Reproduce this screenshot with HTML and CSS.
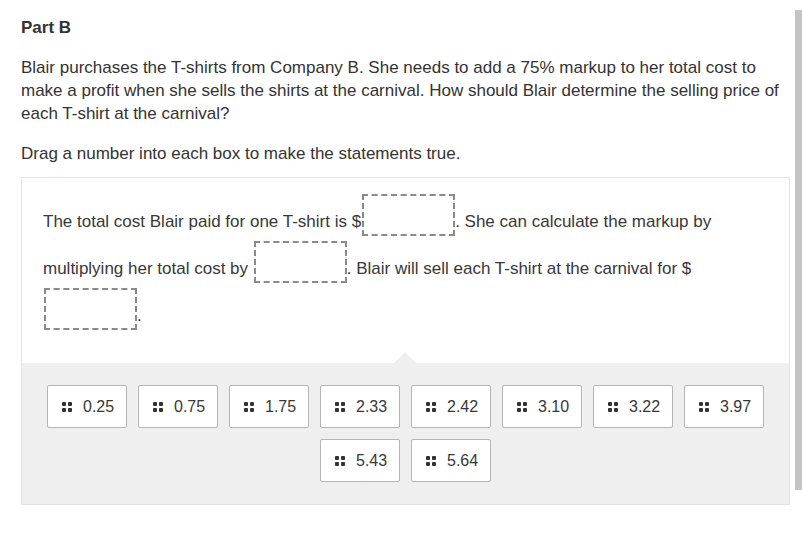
FILE: index.html
```html
<!DOCTYPE html>
<html>
<head>
<meta charset="utf-8">
<link rel="stylesheet" href="styles.css">
</head>
<body>
<div class="page">
  <h2 class="part-title">Part B</h2>
  <p class="question">Blair purchases the T-shirts from Company B. She needs to add a 75% markup to her total cost to make a profit when she sells the shirts at the carnival. How should Blair determine the selling price of each T-shirt at the carnival?</p>
  <p class="instruction">Drag a number into each box to make the statements true.</p>
  <div class="interaction">
    <div class="statement-area">
      <p class="statement">The total cost Blair paid for one T-shirt is $<span class="drop"></span>. She can calculate the markup by multiplying her total cost by <span class="drop"></span>. Blair will sell each T-shirt at the carnival for $ <span class="drop"></span>.</p>
    </div>
    <div class="tray">
      <span class="notch"></span>
      <div class="tile"><span class="grip"><i></i><i></i><i></i><i></i></span>0.25</div>
      <div class="tile"><span class="grip"><i></i><i></i><i></i><i></i></span>0.75</div>
      <div class="tile"><span class="grip"><i></i><i></i><i></i><i></i></span>1.75</div>
      <div class="tile"><span class="grip"><i></i><i></i><i></i><i></i></span>2.33</div>
      <div class="tile"><span class="grip"><i></i><i></i><i></i><i></i></span>2.42</div>
      <div class="tile"><span class="grip"><i></i><i></i><i></i><i></i></span>3.10</div>
      <div class="tile"><span class="grip"><i></i><i></i><i></i><i></i></span>3.22</div>
      <div class="tile"><span class="grip"><i></i><i></i><i></i><i></i></span>3.97</div>
      <div class="tile"><span class="grip"><i></i><i></i><i></i><i></i></span>5.43</div>
      <div class="tile"><span class="grip"><i></i><i></i><i></i><i></i></span>5.64</div>
    </div>
  </div>
</div>
<div class="scrollbar"></div>
</body>
</html>
```
FILE: styles.css
```css
html, body {
  margin: 0;
  padding: 0;
  background: #ffffff;
}
body {
  font-family: "Liberation Sans", Arial, sans-serif;
  font-size: 17px;
  color: #333333;
  width: 802px;
  height: 556px;
  overflow: hidden;
  position: relative;
}
.page {
  padding: 16px 11px 0 21px;
}
.part-title {
  margin: 0;
  font-size: 17px;
  font-weight: bold;
  line-height: 23px;
  color: #333333;
}
.question {
  margin: 17px 0 0 0;
  line-height: 23px;
}
.instruction {
  margin: 17px 0 0 0;
  line-height: 23px;
}
.interaction {
  margin-top: 12px;
  border: 1px solid #e3e3e3;
  width: 767px;
}
.statement-area {
  padding: 16px 21px 28px 21px;
  background: #ffffff;
}
.statement {
  margin: 0;
  line-height: 38px;
  color: #383838;
}
.drop {
  display: inline-block;
  width: 89px;
  height: 38px;
  border: 2px dashed #8a8a8a;
  vertical-align: -9px;
  margin-left: 1px;
  box-sizing: content-box;
}
.tray {
  position: relative;
  background: #efefef;
  padding: 22px 20px 22px 20px;
  display: flex;
  flex-wrap: wrap;
  justify-content: center;
  gap: 11px 11px;
}
.notch {
  position: absolute;
  left: 372px;
  top: -11px;
  width: 0;
  height: 0;
  border-left: 11px solid transparent;
  border-right: 11px solid transparent;
  border-bottom: 11px solid #efefef;
}
.tile {
  display: flex;
  align-items: center;
  box-sizing: border-box;
  width: 80px;
  height: 43px;
  padding: 0 0 0 14px;
  background: #ffffff;
  border: 1px solid #b5b5b5;
  border-radius: 2px;
  color: #383838;
  font-size: 16px;
}
.grip {
  display: grid;
  grid-template-columns: 4px 4px;
  grid-template-rows: 4px 4px;
  gap: 2px;
  margin-right: 11px;
}
.grip i {
  display: block;
  width: 4px;
  height: 4px;
  background: #333333;
  border-radius: 1px;
}
.scrollbar {
  position: absolute;
  right: 0;
  top: 10px;
  width: 7px;
  height: 480px;
  background: #c4c4c4;
}
```
